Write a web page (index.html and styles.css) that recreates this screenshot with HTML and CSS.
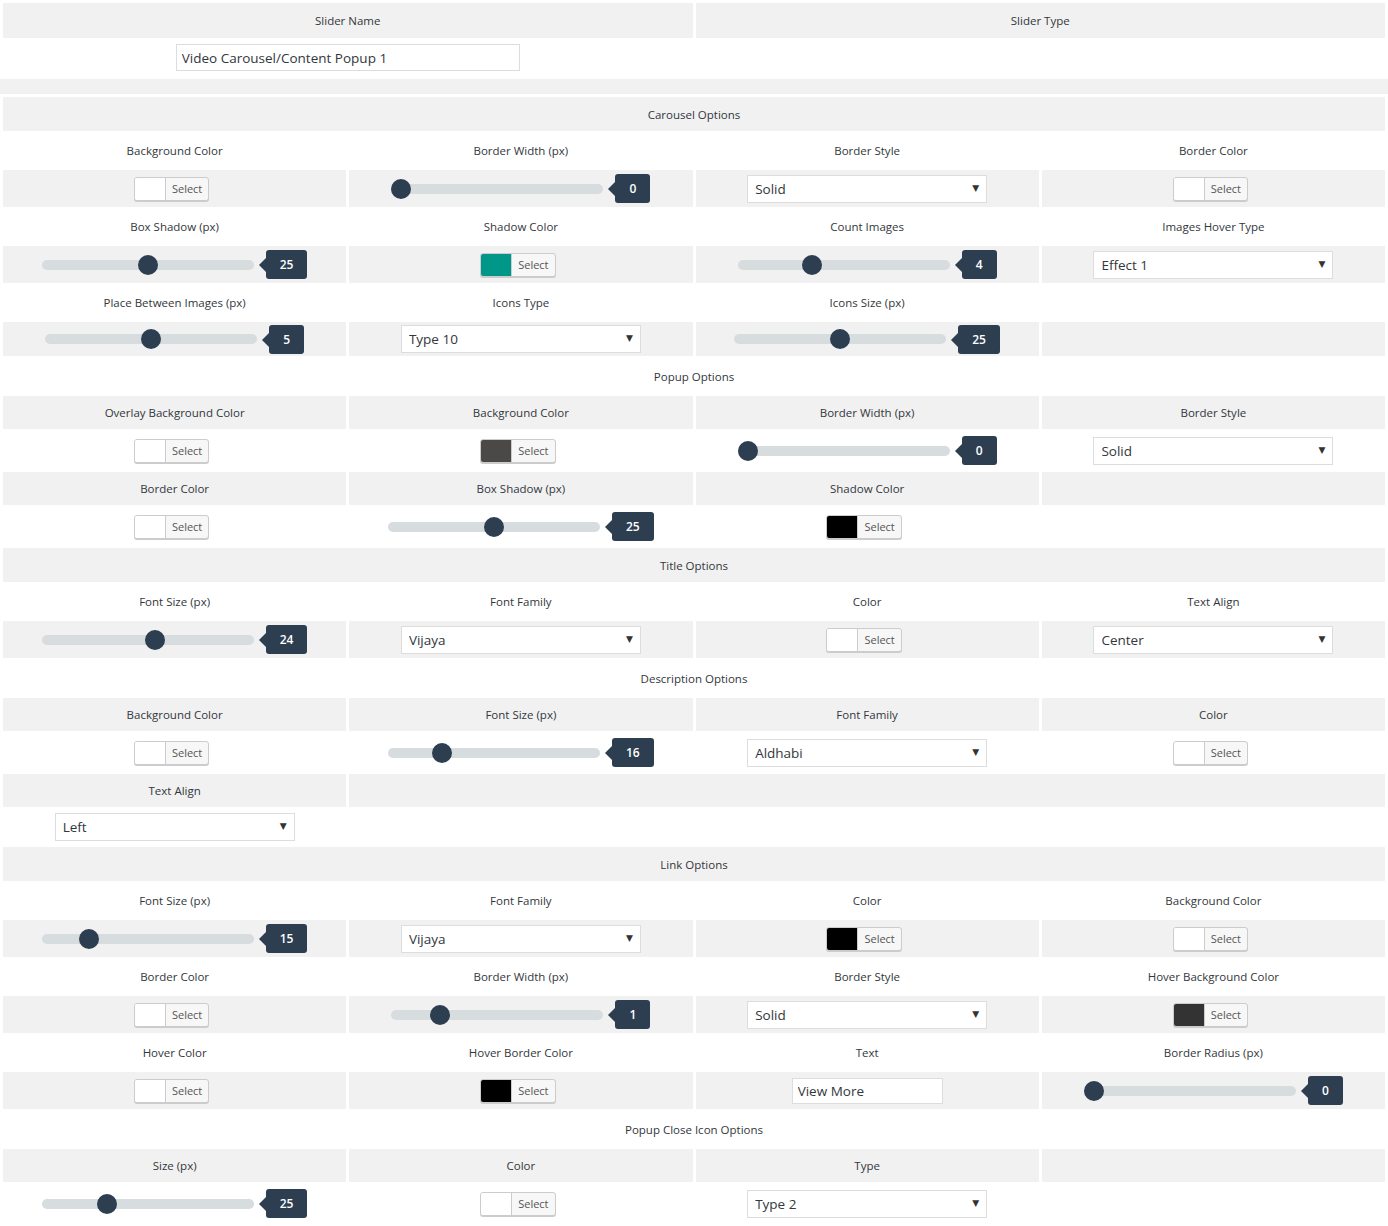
FILE: index.html
```html
<!DOCTYPE html>
<html>
<head>
<meta charset="utf-8">
<title>Slider Options</title>
<link rel="stylesheet" href="styles.css">
</head>
<body>
<table class="grid grid-two">
  <tr class="head">
    <th>Slider Name</th>
    <th>Slider Type</th>
  </tr>
  <tr class="ctrls">
    <td><input class="text-field name-field" type="text" value="Video Carousel/Content Popup 1"></td>
    <td></td>
  </tr>
</table>
<div class="band"></div>
<table class="grid grid-four">
  <tr class="head"><th colspan="4">Carousel Options</th></tr>
  <tr class="labels">
    <td>Background Color</td><td>Border Width (px)</td><td>Border Style</td><td>Border Color</td>
  </tr>
  <tr class="ctrls">
    <td><span class="picker"><span class="swatch sw-white"></span><span class="pick-label">Select</span></span></td>
    <td><span class="range"><input class="range-input" type="range" min="0" max="10" value="0"><span class="range-value">0</span></span></td>
    <td><span class="select"><select><option>Solid</option><option>Dashed</option><option>Dotted</option></select></span></td>
    <td><span class="picker"><span class="swatch sw-white"></span><span class="pick-label">Select</span></span></td>
  </tr>
  <tr class="labels">
    <td>Box Shadow (px)</td><td>Shadow Color</td><td>Count Images</td><td>Images Hover Type</td>
  </tr>
  <tr class="ctrls">
    <td><span class="range"><input class="range-input" type="range" min="0" max="50" value="25"><span class="range-value">25</span></span></td>
    <td><span class="picker"><span class="swatch sw-teal"></span><span class="pick-label">Select</span></span></td>
    <td><span class="range"><input class="range-input" type="range" min="1" max="10" value="4"><span class="range-value">4</span></span></td>
    <td><span class="select"><select><option>Effect 1</option><option>Effect 2</option></select></span></td>
  </tr>
  <tr class="labels">
    <td>Place Between Images (px)</td><td>Icons Type</td><td>Icons Size (px)</td><td></td>
  </tr>
  <tr class="ctrls short">
    <td><span class="range"><input class="range-input" type="range" min="0" max="10" value="5"><span class="range-value">5</span></span></td>
    <td><span class="select"><select><option>Type 10</option><option>Type 1</option></select></span></td>
    <td><span class="range"><input class="range-input" type="range" min="0" max="50" value="25"><span class="range-value">25</span></span></td>
    <td></td>
  </tr>
  <tr class="head"><th colspan="4">Popup Options</th></tr>
  <tr class="labels">
    <td>Overlay Background Color</td><td>Background Color</td><td>Border Width (px)</td><td>Border Style</td>
  </tr>
  <tr class="ctrls">
    <td><span class="picker"><span class="swatch sw-white"></span><span class="pick-label">Select</span></span></td>
    <td><span class="picker"><span class="swatch sw-dark"></span><span class="pick-label">Select</span></span></td>
    <td><span class="range"><input class="range-input" type="range" min="0" max="10" value="0"><span class="range-value">0</span></span></td>
    <td><span class="select"><select><option>Solid</option><option>Dashed</option></select></span></td>
  </tr>
  <tr class="labels">
    <td>Border Color</td><td>Box Shadow (px)</td><td>Shadow Color</td><td></td>
  </tr>
  <tr class="ctrls">
    <td><span class="picker"><span class="swatch sw-white"></span><span class="pick-label">Select</span></span></td>
    <td><span class="range"><input class="range-input" type="range" min="0" max="50" value="25"><span class="range-value">25</span></span></td>
    <td><span class="picker"><span class="swatch sw-black"></span><span class="pick-label">Select</span></span></td>
    <td></td>
  </tr>
  <tr class="head"><th colspan="4">Title Options</th></tr>
  <tr class="labels">
    <td>Font Size (px)</td><td>Font Family</td><td>Color</td><td>Text Align</td>
  </tr>
  <tr class="ctrls">
    <td><span class="range"><input class="range-input" type="range" min="10" max="36" value="24"><span class="range-value">24</span></span></td>
    <td><span class="select"><select><option>Vijaya</option><option>Arial</option></select></span></td>
    <td><span class="picker"><span class="swatch sw-white"></span><span class="pick-label">Select</span></span></td>
    <td><span class="select"><select><option>Center</option><option>Left</option><option>Right</option></select></span></td>
  </tr>
  <tr class="head"><th colspan="4">Description Options</th></tr>
  <tr class="labels">
    <td>Background Color</td><td>Font Size (px)</td><td>Font Family</td><td>Color</td>
  </tr>
  <tr class="ctrls">
    <td><span class="picker"><span class="swatch sw-white"></span><span class="pick-label">Select</span></span></td>
    <td><span class="range"><input class="range-input" type="range" min="10" max="36" value="16"><span class="range-value">16</span></span></td>
    <td><span class="select"><select><option>Aldhabi</option><option>Arial</option></select></span></td>
    <td><span class="picker"><span class="swatch sw-white"></span><span class="pick-label">Select</span></span></td>
  </tr>
  <tr class="labels">
    <td>Text Align</td><td colspan="3"></td>
  </tr>
  <tr class="ctrls short">
    <td><span class="select"><select><option>Left</option><option>Center</option><option>Right</option></select></span></td>
    <td colspan="3"></td>
  </tr>
  <tr class="head"><th colspan="4">Link Options</th></tr>
  <tr class="labels">
    <td>Font Size (px)</td><td>Font Family</td><td>Color</td><td>Background Color</td>
  </tr>
  <tr class="ctrls">
    <td><span class="range"><input class="range-input" type="range" min="10" max="36" value="15"><span class="range-value">15</span></span></td>
    <td><span class="select"><select><option>Vijaya</option><option>Arial</option></select></span></td>
    <td><span class="picker"><span class="swatch sw-black"></span><span class="pick-label">Select</span></span></td>
    <td><span class="picker"><span class="swatch sw-white"></span><span class="pick-label">Select</span></span></td>
  </tr>
  <tr class="labels">
    <td>Border Color</td><td>Border Width (px)</td><td>Border Style</td><td>Hover Background Color</td>
  </tr>
  <tr class="ctrls">
    <td><span class="picker"><span class="swatch sw-white"></span><span class="pick-label">Select</span></span></td>
    <td><span class="range"><input class="range-input" type="range" min="0" max="5" value="1"><span class="range-value">1</span></span></td>
    <td><span class="select"><select><option>Solid</option><option>Dashed</option></select></span></td>
    <td><span class="picker"><span class="swatch sw-charcoal"></span><span class="pick-label">Select</span></span></td>
  </tr>
  <tr class="labels">
    <td>Hover Color</td><td>Hover Border Color</td><td>Text</td><td>Border Radius (px)</td>
  </tr>
  <tr class="ctrls">
    <td><span class="picker"><span class="swatch sw-white"></span><span class="pick-label">Select</span></span></td>
    <td><span class="picker"><span class="swatch sw-black"></span><span class="pick-label">Select</span></span></td>
    <td><input class="text-field short-field" type="text" value="View More"></td>
    <td><span class="range"><input class="range-input" type="range" min="0" max="30" value="0"><span class="range-value">0</span></span></td>
  </tr>
  <tr class="head"><th colspan="4">Popup Close Icon Options</th></tr>
  <tr class="labels">
    <td>Size (px)</td><td>Color</td><td>Type</td><td></td>
  </tr>
  <tr class="ctrls">
    <td><span class="range"><input class="range-input" type="range" min="10" max="62" value="25"><span class="range-value">25</span></span></td>
    <td><span class="picker"><span class="swatch sw-white"></span><span class="pick-label">Select</span></span></td>
    <td><span class="select"><select><option>Type 2</option><option>Type 1</option></select></span></td>
    <td></td>
  </tr>
</table>
</body>
</html>
```

FILE: styles.css
```css
html, body {
  margin: 0;
  padding: 0;
  background: #fff;
}

body {
  font-family: "Open Sans", "Liberation Sans", sans-serif;
  font-size: 11.5px;
  color: #32373c;
}

.grid {
  width: 100%;
  border-collapse: separate;
  border-spacing: 3px;
  table-layout: fixed;
}

.grid th,
.grid td {
  padding: 0;
  text-align: center;
  vertical-align: middle;
  font-weight: normal;
  white-space: nowrap;
}

.grid tr:nth-child(odd) > th,
.grid tr:nth-child(odd) > td {
  background: #f1f1f1;
}

.head th { height: 34px; }
.labels td { height: 33px; }
.ctrls td { height: 37px; }
.ctrls.short td { height: 34px; }

.grid-two .head th { height: 35px; }
.grid-two .ctrls td { height: 35px; }

.band {
  height: 15px;
  background: #f1f1f1;
}

/* text inputs */
.text-field {
  box-sizing: border-box;
  border: 1px solid #ddd;
  background: #fff;
  font-family: "Open Sans", "Liberation Sans", sans-serif;
  font-size: 13.5px;
  color: #32373c;
  padding: 0 5px;
  margin: 0;
  vertical-align: middle;
  outline: none;
}

.name-field {
  width: 344px;
  height: 27px;
  position: relative;
  top: -1px;
}

.short-field {
  width: 151px;
  height: 26px;
}

/* colour picker button */
.picker {
  display: inline-flex;
  box-sizing: border-box;
  height: 24px;
  margin-right: 6px;
  border: 1px solid #ccc;
  border-radius: 3px;
  box-shadow: 0 1px 0 #ccc;
  overflow: hidden;
  vertical-align: middle;
  background: #f7f7f7;
}

.swatch {
  width: 30px;
  height: 100%;
  border-right: 1px solid #ccc;
}

.sw-white { background: #fff; }
.sw-teal { background: #009688; }
.sw-dark { background: #4b4848; }
.sw-black { background: #000; }
.sw-charcoal { background: #333; }

.pick-label {
  padding: 0 6px;
  line-height: 22px;
  font-size: 11px;
  color: #555;
}

/* range slider */
.range {
  display: inline-flex;
  align-items: center;
  vertical-align: middle;
}

.range-input {
  -webkit-appearance: none;
  appearance: none;
  width: 212px;
  height: 10px;
  margin: 0;
  padding: 0;
  border-radius: 5px;
  background: #d7dcdf;
  outline: none;
}

.range-input::-webkit-slider-thumb {
  -webkit-appearance: none;
  appearance: none;
  width: 20px;
  height: 20px;
  border-radius: 50%;
  background: #2c3e50;
  border: 0;
}

.range-value {
  position: relative;
  margin-left: 12px;
  padding: 0 14px;
  height: 29px;
  line-height: 29px;
  border-radius: 3px;
  background: #2c3e50;
  color: #fff;
  font-size: 12px;
  font-weight: 600;
}

.range-value::before {
  content: "";
  position: absolute;
  left: -7px;
  top: 8px;
  border-top: 7px solid transparent;
  border-bottom: 7px solid transparent;
  border-right: 7px solid #2c3e50;
}

/* dropdown */
.select {
  position: relative;
  display: inline-block;
  vertical-align: middle;
}

.select select {
  -webkit-appearance: none;
  appearance: none;
  box-sizing: border-box;
  width: 240px;
  height: 28px;
  margin: 0;
  padding: 0 20px 0 7px;
  border: 1px solid #ddd;
  border-radius: 0;
  background: #fff;
  font-family: "Open Sans", "Liberation Sans", sans-serif;
  font-size: 13.5px;
  color: #32373c;
  outline: none;
  display: block;
}

.select::after {
  content: "\25BC";
  position: absolute;
  right: 8px;
  top: 8px;
  font-family: "DejaVu Sans", sans-serif;
  font-size: 9px;
  line-height: 10px;
  color: #333;
  pointer-events: none;
}
```
